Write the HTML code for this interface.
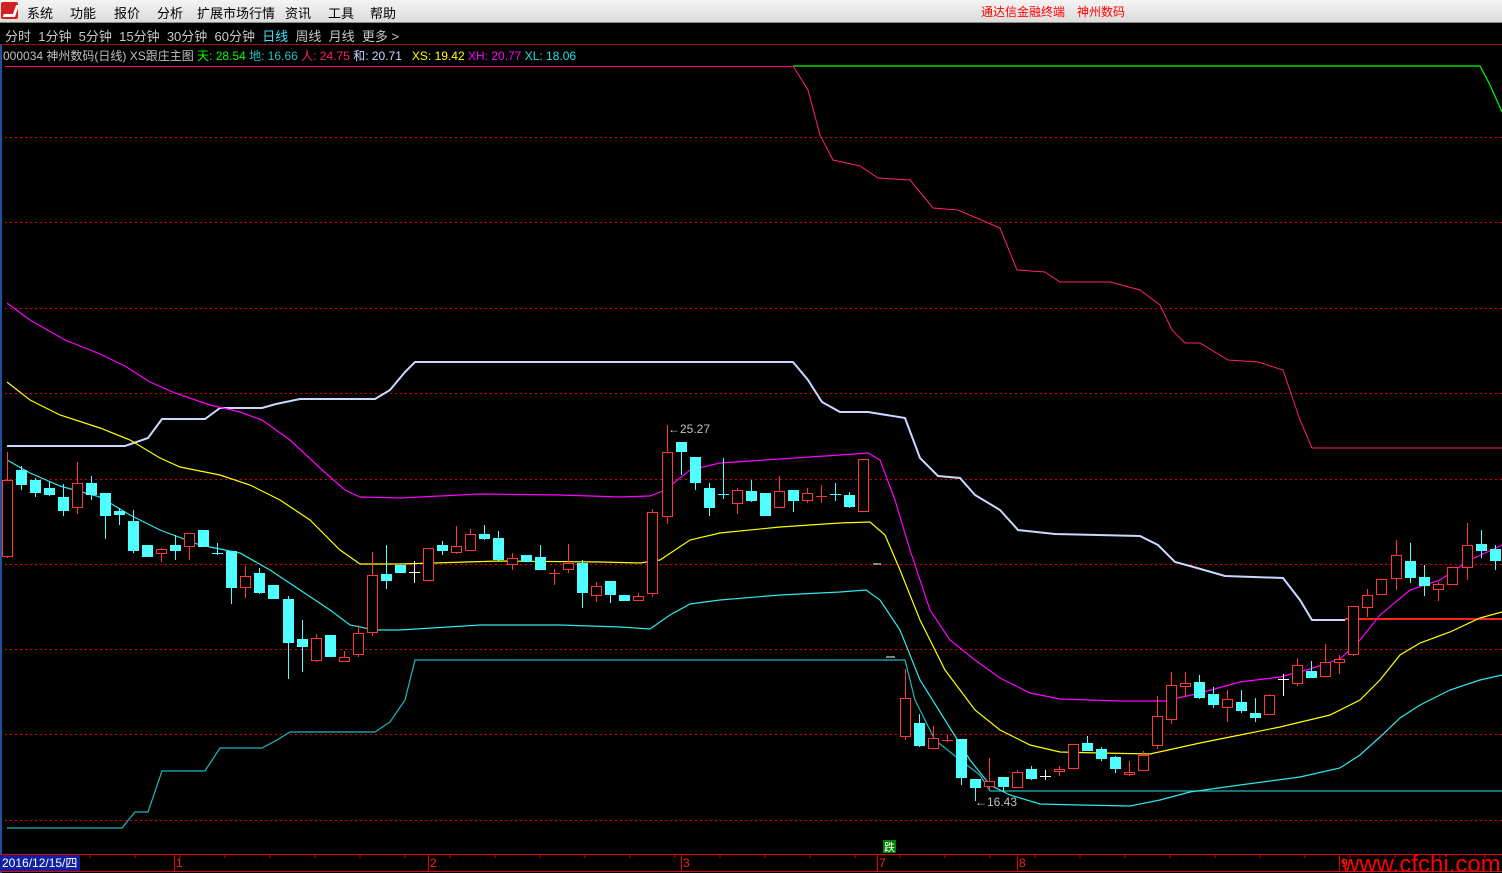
<!DOCTYPE html><html><head><meta charset="utf-8"><style>
*{margin:0;padding:0}body{width:1502px;height:873px;background:#000;overflow:hidden;font-family:"Liberation Sans","Noto Sans CJK SC",sans-serif;position:relative}
#menu{position:absolute;left:0;top:0;width:1502px;height:22px;background:linear-gradient(#f4f4f4,#dcdcdc);border-bottom:1px solid #888}
#menu span{position:absolute;top:3px;font-size:13px;color:#000}
.t{position:absolute;white-space:nowrap}
</style></head><body>
<div id="menu">
<div style="position:absolute;left:1px;top:2px;width:17px;height:17px;background:#d42020;border-radius:2px"><div style="position:absolute;left:4px;top:3px;width:9px;height:9px;border-right:3px solid #fff;border-bottom:3px solid #fff;transform:skewX(-20deg)"></div></div>
<span style="left:27px">系统</span><span style="left:70px">功能</span><span style="left:114px">报价</span><span style="left:157px">分析</span><span style="left:197px">扩展市场行情</span><span style="left:285px">资讯</span><span style="left:328px">工具</span><span style="left:370px">帮助</span>
<span style="left:981px;color:#f00;font-size:12px">通达信金融终端　神州数码</span>
</div>
<div class="t" style="left:5px;top:26px;font-size:13px;color:#c8c8c8;word-spacing:0">分时&nbsp; 1分钟&nbsp; 5分钟&nbsp; 15分钟&nbsp; 30分钟&nbsp; 60分钟&nbsp; <span style="color:#40e0ff">日线</span>&nbsp; 周线&nbsp; 月线&nbsp; 更多 &gt;</div>
<div style="position:absolute;left:0;top:44px;width:1502px;height:1px;background:#a01010"></div>
<div class="t" style="left:3px;top:47px;font-size:12px;color:#c0c0c0">000034 神州数码(日线) XS跟庄主图 <span style="color:#0f0">天: 28.54</span> <span style="color:#20c0c0">地: 16.66</span> <span style="color:#ff2060">人: 24.75</span> <span style="color:#c8d8ff">和: 20.71</span> &nbsp; <span style="color:#ff0">XS: 19.42</span> <span style="color:#f0f">XH: 20.77</span> <span style="color:#20e0e0">XL: 18.06</span></div>
<svg id="s" width="1502" height="873" style="position:absolute;left:0;top:0" xmlns="http://www.w3.org/2000/svg">
<line x1="1" y1="45" x2="1" y2="873" stroke="#2050a0" stroke-width="2"/>
<line x1="5" y1="66.5" x2="793" y2="66.5" stroke="#ff0070" stroke-width="1"/>
<g id="grid" stroke="#e00000" stroke-dasharray="2,3"></g>
<polyline fill="none" stroke="#0f0" stroke-width="1.2" points="793,66 1480,66 1490,85 1502,112"/>
<polyline fill="none" stroke="#ff2070" stroke-width="1" points="793,66 808,90 820,135 833,160 860,166 878,178 910,180 933,208 958,210 1000,228 1017,270 1045,272 1060,282 1110,282 1140,290 1160,305 1172,330 1185,343 1200,343 1228,360 1258,362 1283,370 1300,420 1312,448 1502,448"/>
<polyline fill="none" stroke="#c8d8ff" stroke-width="2" points="7,446 125,446 148,438 162,419 205,419 220,408 262,408 276,404 300,399 375,399 390,390 405,372 415,362 793,362 808,380 822,402 840,412 868,412 905,418 920,458 938,476 960,478 975,495 1000,510 1018,530 1055,534 1140,536 1158,545 1175,562 1190,566 1225,576 1283,578 1300,600 1312,620 1345,620"/>
<line x1="1345" y1="619" x2="1502" y2="619" stroke="#ff2020" stroke-width="2"/>
<polyline fill="none" stroke="#20b8c0" stroke-width="1.2" points="7,828 122,828 135,812 148,812 162,771 205,771 220,748 262,748 277,740 290,732 375,732 390,722 405,700 415,660 905,660 915,700 935,740 960,760 980,775 990,791 1502,791"/>
<polyline fill="none" stroke="#ff00ff" stroke-width="1.2" points="7,303 30,320 65,340 100,354 125,366 150,382 175,393 210,405 240,412 262,420 290,440 320,468 345,490 360,497 400,498 480,494 560,495 620,497 650,496 665,490 690,470 720,463 780,459 840,455 868,453 880,460 895,500 910,550 930,610 950,640 975,660 1000,678 1030,693 1060,699 1120,701 1165,701 1200,693 1240,682 1280,677 1310,669 1340,659 1360,640 1380,615 1410,590 1440,580 1470,560 1502,545"/>
<polyline fill="none" stroke="#ffff00" stroke-width="1.2" points="7,382 30,400 60,415 100,428 130,440 160,458 180,467 220,475 250,485 280,500 310,520 340,550 360,564 400,564 500,561 600,562 640,563 660,560 690,540 720,533 780,527 840,523 870,522 885,535 900,570 920,620 945,670 975,710 1000,730 1030,745 1060,752 1100,753 1150,754 1200,743 1240,735 1280,727 1330,715 1360,700 1380,680 1400,655 1420,643 1450,632 1480,618 1502,612"/>
<polyline fill="none" stroke="#30e8e8" stroke-width="1.2" points="7,460 30,473 60,486 100,497 130,515 160,530 200,545 240,553 270,570 300,590 330,610 350,625 375,630 400,630 480,625 560,625 620,627 650,629 670,615 690,604 720,600 780,595 840,592 866,590 880,600 900,630 920,680 945,720 970,760 990,785 1010,795 1040,804 1080,805 1130,806 1160,800 1190,792 1240,785 1300,777 1340,768 1360,755 1380,737 1400,718 1420,705 1450,690 1480,680 1502,675"/>
<g id="c"></g>
<line x1="873" y1="564" x2="881" y2="564" stroke="#fff"/><line x1="886" y1="657" x2="895" y2="657" stroke="#fff"/>
<text x="668" y="433" fill="#c0c0c0" font-size="12" font-family="Liberation Sans">←25.27</text>
<text x="975" y="806" fill="#c0c0c0" font-size="12" font-family="Liberation Sans">←16.43</text>
<rect x="883" y="840" width="13" height="13" fill="#008000"/><text x="884" y="851" fill="#fff" font-size="11" font-family="Noto Sans CJK SC">跌</text>
<line x1="0" y1="854.5" x2="1502" y2="854.5" stroke="#e00000"/>
<line x1="0" y1="871.5" x2="1502" y2="871.5" stroke="#e00000"/>
<rect x="0" y="855" width="80" height="16" fill="#1020a0"/>
<text x="2" y="867" fill="#fff" font-size="12" font-family="Liberation Sans">2016/12/15/<tspan font-family="Noto Sans CJK SC">四</tspan></text>
<g id="ax" fill="#ff2020" font-size="12" font-family="Liberation Sans"></g>
<text x="1342" y="872" fill="#ff0000" font-size="24" font-family="Liberation Sans">www.cfchi.com</text>
</svg>
<script>
var ns="http://www.w3.org/2000/svg";
function el(p,t,a){var e=document.createElementNS(ns,t);for(var k in a)e.setAttribute(k,a[k]);p.appendChild(e);return e;}
var g=document.getElementById('grid');
[137,222,308,393,479,564,649,734,820].forEach(function(y){el(g,'line',{x1:5,y1:y+.5,x2:1502,y2:y+.5});});
var ax=document.getElementById('ax');
[[176,'1'],[430,'2'],[683,'3'],[879,'7'],[1019,'8'],[1341,'9']].forEach(function(a){el(ax,'line',{x1:a[0]-1.5,y1:855,x2:a[0]-1.5,y2:871,stroke:'#e00000'});var t=el(ax,'text',{x:a[0],y:867});t.textContent=a[1];});
for(var x=90;x<1502;x+=45){el(ax,'line',{x1:x,y1:855,x2:x,y2:858,stroke:'#e00000'});}
var C=[[7,'r',480,556,452,558],[21,'c',470,484,466,490],[35,'c',480,492,478,497],[49,'c',488,494,482,496],[63,'c',497,510,484,516],[77,'r',483,507,462,514],[91,'c',483,494,476,500],[105,'c',493,515,493,539],[119,'c',511,514,508,525],[133,'c',521,550,510,553],[147,'c',545,556,545,556],[161,'r',549,553,548,562],[175,'c',545,550,535,560],[189,'r',533,546,533,560],[203,'c',530,546,530,546],[217,'c',553,553,543,555],[231,'c',551,587,551,604],[245,'r',576,587,566,598],[259,'c',573,592,568,594],[273,'c',585,598,585,598],[288,'c',599,642,596,679],[302,'c',639,646,620,672],[316,'r',638,660,634,662],[330,'c',635,656,635,656],[344,'r',657,661,651,662],[358,'r',633,654,625,657],[372,'r',575,632,552,636],[386,'c',574,580,545,589],[400,'c',565,572,565,572],[414,'w',572,572,561,583],[428,'r',548,580,548,580],[442,'c',545,550,541,555],[456,'r',546,552,526,554],[470,'r',534,550,529,551],[484,'c',534,538,525,540],[498,'c',538,559,531,562],[512,'r',558,564,553,570],[526,'c',555,561,555,561],[540,'c',557,569,545,570],[554,'r',573,573,569,585],[568,'r',563,569,544,573],[582,'c',563,592,560,608],[596,'r',586,595,582,602],[610,'c',581,594,581,603],[624,'c',595,600,595,601],[638,'r',596,600,593,601],[652,'r',512,593,509,597],[667,'r',452,516,425,524],[681,'c',442,451,442,475],[695,'c',457,482,457,490],[709,'c',488,507,483,516],[723,'c',494,494,458,499],[737,'r',490,503,488,514],[751,'c',491,500,480,502],[765,'c',493,515,493,515],[779,'r',491,507,476,507],[793,'c',490,500,490,512],[807,'r',493,500,488,503],[821,'r',496,496,485,503],[835,'c',494,494,483,501],[849,'c',495,506,492,508],[863,'r',459,511,459,511],
[905,'r',698,736,669,740],[919,'c',723,745,714,747],[933,'r',738,748,726,749],[947,'r',740,740,735,742],[961,'c',739,777,739,785],[975,'c',779,787,779,801],[989,'r',781,786,758,789],[1003,'c',777,786,777,792],[1017,'r',772,787,770,788],[1031,'c',769,778,766,780],[1045,'w',776,776,770,780],[1059,'r',769,771,766,776],[1073,'r',744,768,744,768],[1087,'c',743,750,736,751],[1101,'c',749,758,747,761],[1115,'c',757,768,756,773],[1129,'r',772,774,761,776],[1143,'r',755,770,751,771],[1157,'r',716,745,696,749],[1171,'r',685,719,672,724],[1185,'r',683,686,672,696],[1199,'c',682,697,675,699],[1213,'c',694,704,687,708],[1227,'r',699,707,690,722],[1241,'c',702,710,690,713],[1255,'c',713,717,698,722],[1269,'r',695,714,694,715],[1283,'w',679,679,674,696],[1297,'r',665,683,658,686],[1311,'c',671,677,661,678],[1325,'r',662,676,644,677],[1339,'r',659,662,655,674],[1353,'r',606,654,606,656],[1367,'r',595,607,589,617],[1381,'r',579,594,579,594],[1396,'r',555,578,540,590],[1410,'c',561,577,543,583],[1424,'c',577,585,565,596],[1438,'r',584,589,582,601],[1452,'r',567,584,567,584],[1467,'r',545,567,523,580],[1481,'c',544,550,530,558],[1495,'c',549,560,545,570]];
var cg=document.getElementById('c');
C.forEach(function(k){var x=k[0],col=k[1]=='r'?'#ff3838':k[1]=='c'?'#50ffff':'#ffffff';
el(cg,'line',{x1:x+.5,y1:k[4],x2:x+.5,y2:k[5],stroke:col});
if(k[3]-k[2]<1){el(cg,'line',{x1:x-5,y1:k[2]+.5,x2:x+6,y2:k[2]+.5,stroke:col});}
else if(k[1]=='r'){el(cg,'rect',{x:x-4.5,y:k[2]+.5,width:10,height:k[3]-k[2],fill:'#000',stroke:col});}
else{el(cg,'rect',{x:x-5,y:k[2],width:11,height:k[3]-k[2]+1,fill:col});}
});
</script>
</body></html>
